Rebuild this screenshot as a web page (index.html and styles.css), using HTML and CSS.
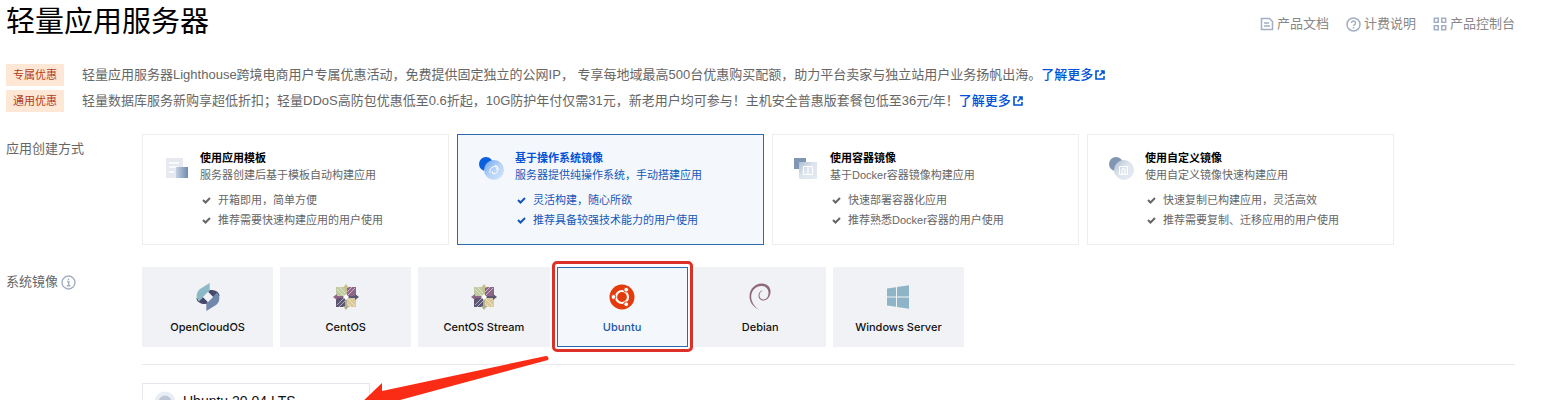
FILE: index.html
```html
<!DOCTYPE html>
<html lang="zh-CN">

<head>
    <meta charset="UTF-8">
    <meta name="viewport" content="width=device-width, initial-scale=1.0">
    <title>轻量应用服务器</title>
    <link rel="stylesheet" href="styles.css">
</head>

<body>
    <header class="header">
        <h1>轻量应用服务器</h1>
        <nav class="header-links">
            <a href="#">
                <svg width="14" height="14" viewBox="0 0 14 14" fill="none" stroke="currentColor" stroke-width="1.5"><path d="M1.5 1.5h8l3 3v8h-11zM4 6h5M4 9h6"/></svg>
                产品文档
            </a>
            <a href="#">
                <svg width="15" height="15" viewBox="0 0 15 15" fill="none" stroke="currentColor" stroke-width="1.5"><circle cx="7.5" cy="7.5" r="6.5"/><path d="M5.5 6a2 2 0 1 1 2.8 1.9c-.6.3-.8.6-.8 1.2M7.5 10v1.5"/></svg>
                计费说明
            </a>
            <a href="#">
                <svg width="14" height="14" viewBox="0 0 14 14" fill="none" stroke="currentColor" stroke-width="1.5"><path d="M1.3 1.3h4v4h-4zM8.7 1.3h4v4h-4zM1.3 8.7h4v4h-4zM8.7 8.7h4v4h-4z"/></svg>
                产品控制台
            </a>
        </nav>
    </header>

    <main>
        <div class="notices">
            <div class="notice">
                <span class="tag">专属优惠</span>
                <p>轻量应用服务器Lighthouse跨境电商用户专属优惠活动，免费提供固定独立的公网IP， 专享每地域最高500台优惠购买配额，助力平台卖家与独立站用户业务扬帆出海。<a href="#">了解更多<svg width="10" height="10" viewBox="0 0 10 10" fill="none" stroke="currentColor" stroke-width="1.6"><path d="M4 1H1v8h8V6M5.8 1H9v3.2M9 1L4.5 5.5"/></svg></a></p>
            </div>
            <div class="notice">
                <span class="tag">通用优惠</span>
                <p>轻量数据库服务新购享超低折扣；轻量DDoS高防包优惠低至0.6折起，10G防护年付仅需31元，新老用户均可参与！主机安全普惠版套餐包低至36元/年！<a href="#">了解更多<svg width="10" height="10" viewBox="0 0 10 10" fill="none" stroke="currentColor" stroke-width="1.6"><path d="M4 1H1v8h8V6M5.8 1H9v3.2M9 1L4.5 5.5"/></svg></a></p>
            </div>
        </div>

        <section class="row">
            <h2 class="row-label">应用创建方式</h2>
            <div class="row-content cards">
                <button type="button" class="card">
                    <svg class="card-icon" viewBox="0 0 26 26">
                        <defs><linearGradient id="g1"><stop offset="0" stop-color="#c3d0e0"/><stop offset="1" stop-color="#6f8bb0"/></linearGradient></defs>
                        <path d="M2 3h17v20H2z" fill="#e6eaf0"/>
                        <path d="M5 8h10M5 12h9M5 17h5" stroke="#fff" stroke-width="1.5"/>
                        <path d="M12 12h12v11H12z" fill="url(#g1)"/>
                    </svg>
                    <span class="card-body">
                        <strong>使用应用模板</strong>
                        <span class="desc">服务器创建后基于模板自动构建应用</span>
                        <span class="point"><svg width="9" height="7" viewBox="0 0 9 7"><path d="M1 3l2.5 2.5L8 1"/></svg>开箱即用，简单方便</span>
                        <span class="point"><svg width="9" height="7" viewBox="0 0 9 7"><path d="M1 3l2.5 2.5L8 1"/></svg>推荐需要快速构建应用的用户使用</span>
                    </span>
                </button>
                <button type="button" class="card active">
                    <svg class="card-icon" viewBox="0 0 26 26">
                        <defs><linearGradient id="g2" x2="1" y2="1"><stop offset="0" stop-color="#6ba4ee"/><stop offset=".5" stop-color="#b5d2f7"/><stop offset="1" stop-color="#d5e5fa"/></linearGradient></defs>
                        <circle cx="7" cy="9" r="7" fill="#0a5fdc"/>
                        <circle cx="15" cy="15" r="10" fill="url(#g2)"/>
                        <path d="M11 18a5 5 0 0 1 7-6M19 13a5 5 0 0 1-5 6M16 10l3 2-2 3M13 16l1 3" stroke="#fff" fill="none"/>
                    </svg>
                    <span class="card-body">
                        <strong>基于操作系统镜像</strong>
                        <span class="desc">服务器提供纯操作系统，手动搭建应用</span>
                        <span class="point"><svg width="9" height="7" viewBox="0 0 9 7"><path d="M1 3l2.5 2.5L8 1"/></svg>灵活构建，随心所欲</span>
                        <span class="point"><svg width="9" height="7" viewBox="0 0 9 7"><path d="M1 3l2.5 2.5L8 1"/></svg>推荐具备较强技术能力的用户使用</span>
                    </span>
                </button>
                <button type="button" class="card">
                    <svg class="card-icon" viewBox="0 0 26 26">
                        <defs><linearGradient id="g3" x2="1" y2="1"><stop offset="0" stop-color="#adbdd0"/><stop offset=".45" stop-color="#dde4ed"/><stop offset="1" stop-color="#e5ebf2"/></linearGradient></defs>
                        <path d="M0 3h12v11H0z" fill="#8096b3"/>
                        <path d="M5 7h18v17H5z" fill="url(#g3)"/>
                        <path d="M9.5 11.5h9v8h-9zM14 11v9" stroke="#fff" fill="none"/>
                    </svg>
                    <span class="card-body">
                        <strong>使用容器镜像</strong>
                        <span class="desc">基于Docker容器镜像构建应用</span>
                        <span class="point"><svg width="9" height="7" viewBox="0 0 9 7"><path d="M1 3l2.5 2.5L8 1"/></svg>快速部署容器化应用</span>
                        <span class="point"><svg width="9" height="7" viewBox="0 0 9 7"><path d="M1 3l2.5 2.5L8 1"/></svg>推荐熟悉Docker容器的用户使用</span>
                    </span>
                </button>
                <button type="button" class="card">
                    <svg class="card-icon" viewBox="0 0 26 26">
                        <circle cx="7" cy="9" r="7" fill="#8096b3"/>
                        <circle cx="15" cy="15" r="10" fill="url(#g3)"/>
                        <path d="M10.5 11.5h8v8h-8zM13 14h3v5h-3z" stroke="#fff" fill="none"/>
                    </svg>
                    <span class="card-body">
                        <strong>使用自定义镜像</strong>
                        <span class="desc">使用自定义镜像快速构建应用</span>
                        <span class="point"><svg width="9" height="7" viewBox="0 0 9 7"><path d="M1 3l2.5 2.5L8 1"/></svg>快速复制已构建应用，灵活高效</span>
                        <span class="point"><svg width="9" height="7" viewBox="0 0 9 7"><path d="M1 3l2.5 2.5L8 1"/></svg>推荐需要复制、迁移应用的用户使用</span>
                    </span>
                </button>
            </div>
        </section>

        <section class="row">
            <h2 class="row-label">系统镜像
                <svg width="15" height="15" viewBox="0 0 15 15" fill="none" stroke="#a3afbf" stroke-width="1.4"><circle cx="7.5" cy="7.5" r="6.5"/><path d="M7.5 3.5v1.5M6 6.5h1.7v4M5.8 10.8h3.6"/></svg>
            </h2>
            <div class="row-content">
                <div class="systems">
                    <button type="button" class="system">
                        <svg width="28" height="28" viewBox="0 0 28 28">
                            <path d="M15.700 7C20 6.500 25.500 8.500 25.500 13L21 16l-7-7z" fill="#454b68"/>
                            <path d="M12.300 21C8 21.500 2.500 19.500 2.500 15L7 12l7 7z" fill="#454b68"/>
                            <path d="M15.700 0v7.500L5 18.500C1.500 15 2 9 6 6z" fill="#8bb9c6"/>
                            <path d="M12.300 28v-7.500L23 9.500C26.500 13 26 19 22 22z" fill="#7088ac"/>
                            <path d="M14 9l5 5-5 5-5-5z" fill="#f1f2f6"/>
                        </svg>
                        OpenCloudOS
                    </button>
                    <button type="button" class="system">
                        <svg width="28" height="28" viewBox="0 0 28 28">
                            <g id="centos">
                                <path d="M4 4h9v9H4z" fill="#c0cba0"/>
                                <path d="M15 4h9v9h-9z" fill="#8d6689"/>
                                <path d="M4 15h9v9H4z" fill="#5b5673"/>
                                <path d="M15 15h9v9h-9z" fill="#dccb99"/>
                                <path d="M5 6l7 7M7 4l6 6M16 12l7-7M15 9l5-5M5 22l7-7M7 24l6-6M16 16l7 7M15 20l4 4" stroke="#f1f2f6" stroke-width=".6"/>
                                <path d="M14 1l3 4h-2v7h-2V5h-2z" fill="#c9bd89"/>
                                <path d="M27 14l-4 3v-2h-7v-2h7v-2z" fill="#5b5673"/>
                                <path d="M14 27l-3-4h2v-7h2v7h2z" fill="#aeb18b"/>
                                <path d="M1 14l4-3v2h7v2H5v2z" fill="#8d6689"/>
                                <path d="M14 11l3 3-3 3-3-3z" fill="#fff"/>
                            </g>
                        </svg>
                        CentOS
                    </button>
                    <button type="button" class="system">
                        <svg width="28" height="28" viewBox="0 0 28 28"><use href="#centos"/></svg>
                        CentOS Stream
                    </button>
                    <div class="system-picked">
                        <button type="button" class="system active">
                            <svg width="28" height="28" viewBox="0 0 28 28">
                                <circle cx="14" cy="14" r="12.5" fill="#e43b0c"/>
                                <circle cx="14" cy="14" r="6" fill="none" stroke="#fff" stroke-width="2.2"/>
                                <g fill="#fff" stroke="#e43b0c"><circle cx="5.5" cy="14" r="2.4"/><circle cx="18.2" cy="6.7" r="2.4"/><circle cx="18.2" cy="21.3" r="2.4"/></g>
                            </svg>
                            Ubuntu
                        </button>
                        <svg class="arrow" width="190" height="60" viewBox="0 0 190 60">
                            <path d="M187 0L23 35v-8L0 49l30 9v-11L189 4a2.5 2.5 0 0 0-2-4z" fill="#fb2c16"/>
                        </svg>
                    </div>
                    <button type="button" class="system">
                        <svg width="28" height="28" viewBox="0 0 28 28">
                            <path d="M13.5 27C7 24 3.500 19 3.500 13.500 3.500 6 9 .5 15.500.5c6 0 9.500 4 9 9-.4 4-3 8-7 8-3.500 0-5-2.500-5-5 0-3 2-5 4.500-5-2 .8-3.500 2.500-3.500 4.700 0 2.300 1.500 4.300 4 4.300 3.300 0 5-3.200 5-6.500 0-4.500-3-7-7-7C10 3 5.200 7.500 5.200 13.700c0 5 3.300 10.300 8.300 13.300z" fill="#906a7a"/>
                        </svg>
                        Debian
                    </button>
                    <button type="button" class="system">
                        <svg width="28" height="28" viewBox="0 0 28 28" fill="#8db5c7"><path d="M3 5.500l9-1.300v9.300H3zM13 4l12-1.700v11.200H13zM3 14.500h9v9.300l-9-1.300zM13 14.500h12v11.200L13 24z"/></svg>
                        Windows Server
                    </button>
                </div>
                <hr>
                <button type="button" class="version">
                    <svg width="22" height="22" viewBox="0 0 22 22"><circle cx="11" cy="11" r="10.5" fill="#e9edf4"/><circle cx="11" cy="11" r="6.5" fill="#bec7d6"/></svg>
                    Ubuntu 20.04 LTS
                </button>
            </div>
        </section>
    </main>
</body>

</html>
```
FILE: styles.css
```css
* {
    box-sizing: border-box;
}

html {
    overflow: hidden;
}

body {
    margin: 0;
    padding: 0 30px 0 6px;
    background-color: #fff;
    color: #666;
    font-family: "Liberation Sans", "Noto Sans CJK SC", sans-serif;
    font-size: 13px;
    line-height: 20px;
}

button {
    margin: 0;
    font-family: inherit;
    color: inherit;
    cursor: pointer;
}

a {
    text-decoration: none;
}

svg {
    flex-shrink: 0;
}

h1 {
    margin: 0;
    color: #000;
    font-size: 29px;
    font-weight: normal;
    line-height: 44px;
}

.header {
    display: flex;
    justify-content: space-between;
    align-items: center;
    padding-bottom: 20px;
}

.header-links {
    display: flex;
    gap: 17px;
    padding-top: 4px;
}

.header-links a {
    display: flex;
    align-items: center;
    gap: 3px;
    color: #888;
}

.header-links svg {
    color: #a3afc0;
}

.notices {
    display: flex;
    flex-direction: column;
    gap: 4px;
    margin-bottom: 22px;
}

.notice {
    display: flex;
    align-items: center;
    gap: 18px;
}

.notice p {
    margin: 0;
}

.notice a {
    color: #0052d9;
    font-weight: 500;
}

.notice a svg {
    margin-left: 2px;
    vertical-align: -1px;
}

.tag {
    padding: 0 7px;
    background-color: #ffe7d6;
    color: #b13c1c;
    font-size: 11px;
    line-height: 22px;
}

/* label on the left, options on the right */
.row {
    display: flex;
    margin-bottom: 22px;
}

.row-label {
    display: flex;
    align-items: center;
    align-self: flex-start;
    gap: 3px;
    flex: 0 0 136px;
    margin: 5px 0 0;
    font-size: 13px;
    font-weight: normal;
}

.row-content {
    flex: 1;
    min-width: 0;
}

.cards {
    display: grid;
    grid-template-columns: repeat(4, 1fr);
    gap: 8px;
    max-width: 1252px;
}

.card {
    display: flex;
    align-items: flex-start;
    gap: 10px;
    padding: 15px 21px 14px;
    border: 1px solid #eee;
    background-color: #fff;
    font-size: 11px;
    text-align: left;
}

.card-icon {
    width: 26px;
    height: 26px;
    margin-top: 5px;
}

.card-body {
    display: flex;
    flex-direction: column;
    line-height: 17px;
}

.card strong {
    color: #000;
}

.desc {
    margin-bottom: 6px;
}

.point {
    display: flex;
    align-items: center;
    gap: 7px;
    padding-left: 2px;
    line-height: 20px;
}

.point svg {
    fill: none;
    stroke: currentColor;
    stroke-width: 2;
}

.card.active {
    border-color: #2a6ab0;
    background-color: #f4f8fd;
    color: #1457b8;
}

.card.active strong {
    color: #0052d9;
}

.systems {
    display: grid;
    grid-template-columns: repeat(6, 1fr);
    gap: 7px;
    max-width: 822px;
}

.system {
    display: flex;
    flex-direction: column;
    align-items: center;
    gap: 6px;
    width: 100%;
    padding: 15px 0 9px;
    border: 1px solid #f1f2f6;
    background-color: #f1f2f6;
    color: #111;
    font-family: Inter, sans-serif;
    font-size: 11px;
    font-weight: 500;
    line-height: 20px;
}

.system.active {
    border-color: #2a6ab0;
    background-color: #f4f8fd;
    color: #1b57a8;
}

.system-picked {
    position: relative;
}

/* red marker round the chosen system */
.system-picked::after {
    content: "";
    position: absolute;
    inset: -6px -5px -5px;
    border: 3px solid #dd3028;
    border-radius: 5px;
    pointer-events: none;
}

.arrow {
    position: absolute;
    top: 89px;
    right: 139px;
}

hr {
    margin: 17px 0 18px;
    border: 0;
    border-top: 1px solid #eaeaea;
}

.version {
    display: flex;
    align-items: flex-start;
    gap: 7px;
    width: 228px;
    padding: 7px 11px;
    border: 1px solid #e4e7ed;
    background-color: #fff;
    color: #111;
    font-size: 14px;
    line-height: 20px;
}
```
